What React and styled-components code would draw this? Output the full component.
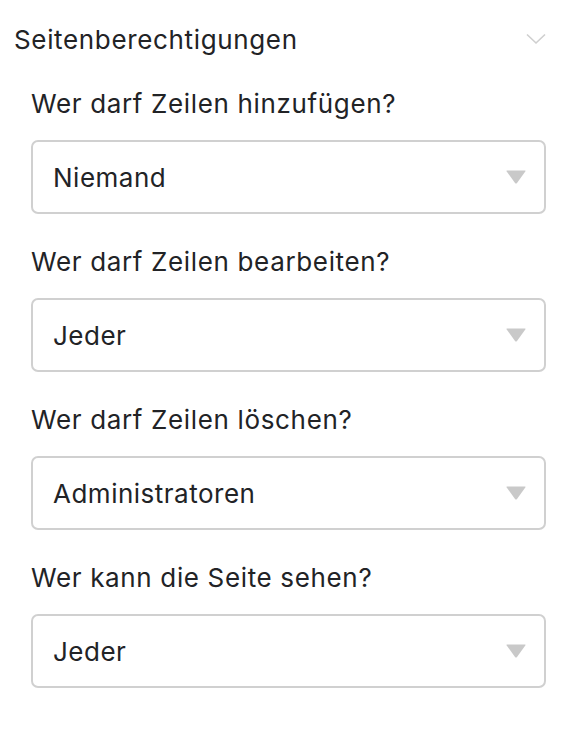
import React from 'react';
import styled, { createGlobalStyle } from 'styled-components';

const GlobalStyle = createGlobalStyle`
    body {
        margin: 0;
        background: #ffffff;
        font-family: Inter, "Liberation Sans", sans-serif;
        color: #222326;
    }
`

const Panel = styled.section`
    width: 572px;
    padding: 20px 0 0 0;
`

const SectionHeader = styled.header`
    display: flex;
    justify-content: space-between;
    align-items: center;
    padding: 0 26px 0 14px;
    height: 38px;
    h2 {
        margin: 0;
        font-size: 26px;
        font-weight: 400;
        letter-spacing: 0.65px;
    }
`

const Fields = styled.div`
    display: flex;
    flex-direction: column;
    gap: 33px;
    padding: 31px 26px 0 31px;
`

const Field = styled.div`
    display: flex;
    flex-direction: column;
    gap: 21px;
`

const Label = styled.label`
    font-size: 26px;
    line-height: 30px;
    letter-spacing: 0.65px;
`

const SelectBox = styled.div`
    display: flex;
    align-items: center;
    justify-content: space-between;
    height: 74px;
    box-sizing: border-box;
    padding: 0 17px 0 20px;
    border: 2px solid #d0d0d0;
    border-radius: 7px;
    font-size: 26px;
    letter-spacing: 0.5px;
`

const Chevron = () => (
    <svg width="20" height="12" viewBox="0 0 20 12">
        <path d="M1 1.5 L10 10 L19 1.5" fill="none" stroke="#cfcfcf" strokeWidth="1.6" />
    </svg>
)

const Caret = () => (
    <svg width="22" height="16" viewBox="0 0 22 16">
        <path d="M2 1.5 H20 Q21 1.5 20.3 2.5 L12 14 Q11 15 10 14 L1.7 2.5 Q1 1.5 2 1.5 Z" fill="#c9c9c9" />
    </svg>
)

const fields = [
    { label: 'Wer darf Zeilen hinzufügen?', value: 'Niemand' },
    { label: 'Wer darf Zeilen bearbeiten?', value: 'Jeder' },
    { label: 'Wer darf Zeilen löschen?', value: 'Administratoren' },
    { label: 'Wer kann die Seite sehen?', value: 'Jeder' },
]

export default function App() {
    return (
        <Panel>
            <GlobalStyle />
            <SectionHeader>
                <h2>Seitenberechtigungen</h2>
                <Chevron />
            </SectionHeader>
            <Fields>
                {fields.map((f) => (
                    <Field key={f.label}>
                        <Label>{f.label}</Label>
                        <SelectBox>
                            <span>{f.value}</span>
                            <Caret />
                        </SelectBox>
                    </Field>
                ))}
            </Fields>
        </Panel>
    )
}
